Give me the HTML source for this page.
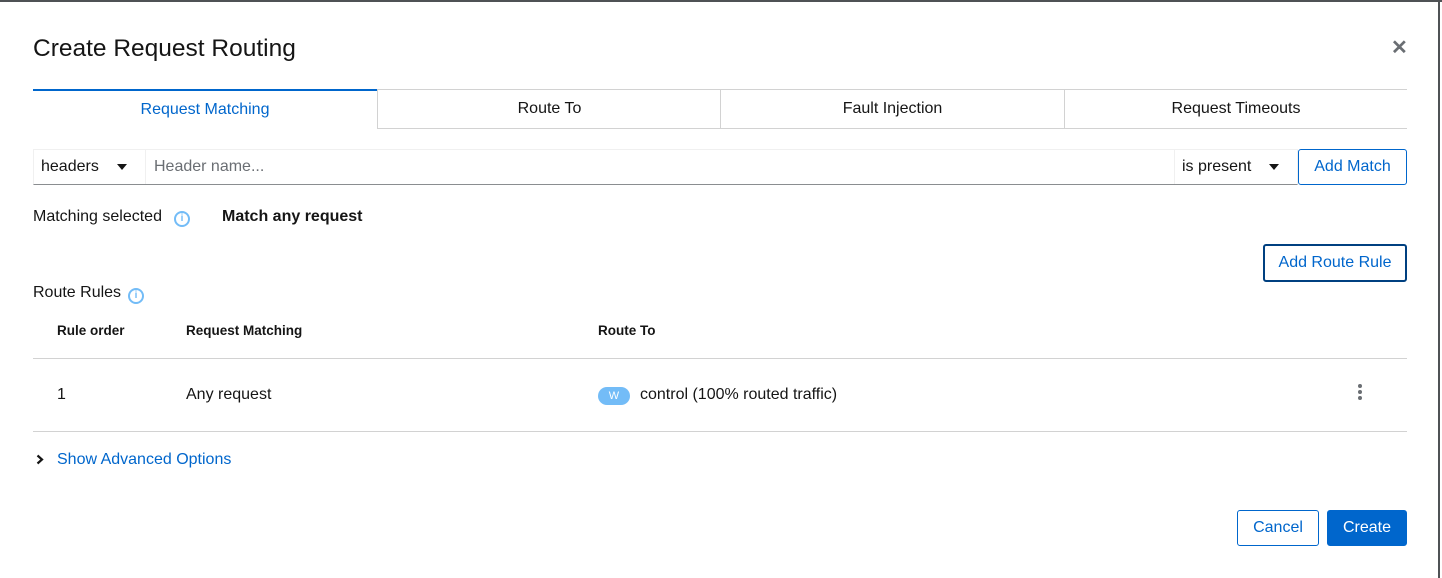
<!DOCTYPE html>
<html><head><style>
*{box-sizing:border-box;margin:0;padding:0}
body{width:1442px;height:578px;overflow:hidden;background:#fff;font-family:"Liberation Sans",sans-serif;color:#151515;font-size:16px;position:relative}
.a{position:absolute;white-space:nowrap}
.tab{position:absolute;top:89px;height:40px;border-top:1px solid #d2d2d2;border-bottom:1px solid #d2d2d2;text-align:center;line-height:38px;font-size:16px;color:#151515}
.blue{color:#0066cc}
.btn{position:absolute;border:1px solid #0066cc;border-radius:3px;color:#0066cc;text-align:center;font-size:16px}
.info{display:inline-block;width:16px;height:16px;border:2px solid #73bcf7;border-radius:50%;color:#73bcf7;font-size:10px;font-weight:bold;text-align:center;line-height:12px;font-family:"Liberation Sans",sans-serif}
</style></head><body>
<div class="a" style="left:0;top:0;width:1442px;height:2px;background:#4f5255"></div>
<div class="a" style="left:1438px;top:0;width:2px;height:578px;background:#4f5255"></div>
<div class="a" style="left:33px;top:35px;font-size:24.5px;">Create Request Routing</div>
<div class="a" style="left:1391px;top:35px;font-size:20px;font-weight:bold;color:#6a6e73">✕</div>

<div class="tab blue" style="left:33px;width:344px;border:none;border-top:2px solid #0066cc;line-height:38px">Request Matching</div>
<div class="tab" style="left:377px;width:344px;border-left:1px solid #d2d2d2">Route To</div>
<div class="tab" style="left:720px;width:344px;border-left:1px solid #d2d2d2">Fault Injection</div>
<div class="tab" style="left:1064px;width:343px;border-left:1px solid #d2d2d2">Request Timeouts</div>

<div class="a" style="left:33px;top:149px;width:1265px;height:36px;border:1px solid #f0f0f0;border-bottom:1px solid #8a8d90"></div>
<div class="a" style="left:41px;top:158px">headers</div>
<div class="a" style="left:117px;top:164px;border-left:5px solid transparent;border-right:5px solid transparent;border-top:6px solid #151515"></div>
<div class="a" style="left:145px;top:150px;width:1px;height:34px;background:#f0f0f0"></div>
<div class="a" style="left:154px;top:158px;color:#6a6e73">Header name...</div>
<div class="a" style="left:1174px;top:150px;width:1px;height:34px;background:#f0f0f0"></div>
<div class="a" style="left:1182px;top:158px">is present</div>
<div class="a" style="left:1269px;top:164px;border-left:5px solid transparent;border-right:5px solid transparent;border-top:6px solid #151515"></div>
<div class="btn" style="left:1298px;top:149px;width:109px;height:36px;line-height:34px">Add Match</div>

<div class="a" style="left:33px;top:208px">Matching selected</div>
<div class="a" style="left:174px;top:208px"><span class="info">i</span></div>
<div class="a" style="left:222px;top:208px;font-weight:bold">Match any request</div>

<div class="btn" style="left:1263px;top:244px;width:144px;height:38px;line-height:34px;border:2px solid #004080">Add Route Rule</div>

<div class="a" style="left:33px;top:284px">Route Rules</div>
<div class="a" style="left:128px;top:285px"><span class="info">i</span></div>

<div class="a" style="left:57px;top:323px;font-size:13.5px;font-weight:bold">Rule order</div>
<div class="a" style="left:186px;top:323px;font-size:13.5px;font-weight:bold">Request Matching</div>
<div class="a" style="left:598px;top:323px;font-size:13.5px;font-weight:bold">Route To</div>
<div class="a" style="left:33px;top:358px;width:1374px;height:1px;background:#d2d2d2"></div>
<div class="a" style="left:57px;top:386px">1</div>
<div class="a" style="left:186px;top:386px">Any request</div>
<div class="a" style="left:598px;top:387px;width:32px;height:18px;border-radius:9px;background:#73bcf7;color:#fff;font-size:11px;text-align:center;line-height:18px">W</div>
<div class="a" style="left:640px;top:386px">control (100% routed traffic)</div>
<div class="a" style="left:1358px;top:384px;width:4px;height:4px;border-radius:2px;background:#6a6e73;box-shadow:0 6px 0 #6a6e73,0 12px 0 #6a6e73"></div>
<div class="a" style="left:33px;top:431px;width:1374px;height:1px;background:#d2d2d2"></div>

<svg class="a" style="left:36px;top:454px" width="8" height="11" viewBox="0 0 8 11"><path d="M1.5 1.5L6 5.5L1.5 9.5" fill="none" stroke="#151515" stroke-width="2.2"/></svg>
<div class="a blue" style="left:57px;top:451px">Show Advanced Options</div>

<div class="btn" style="left:1237px;top:510px;width:82px;height:36px;line-height:34px">Cancel</div>
<div class="btn" style="left:1327px;top:510px;width:80px;height:36px;line-height:34px;background:#0066cc;color:#fff">Create</div>
</body></html>
